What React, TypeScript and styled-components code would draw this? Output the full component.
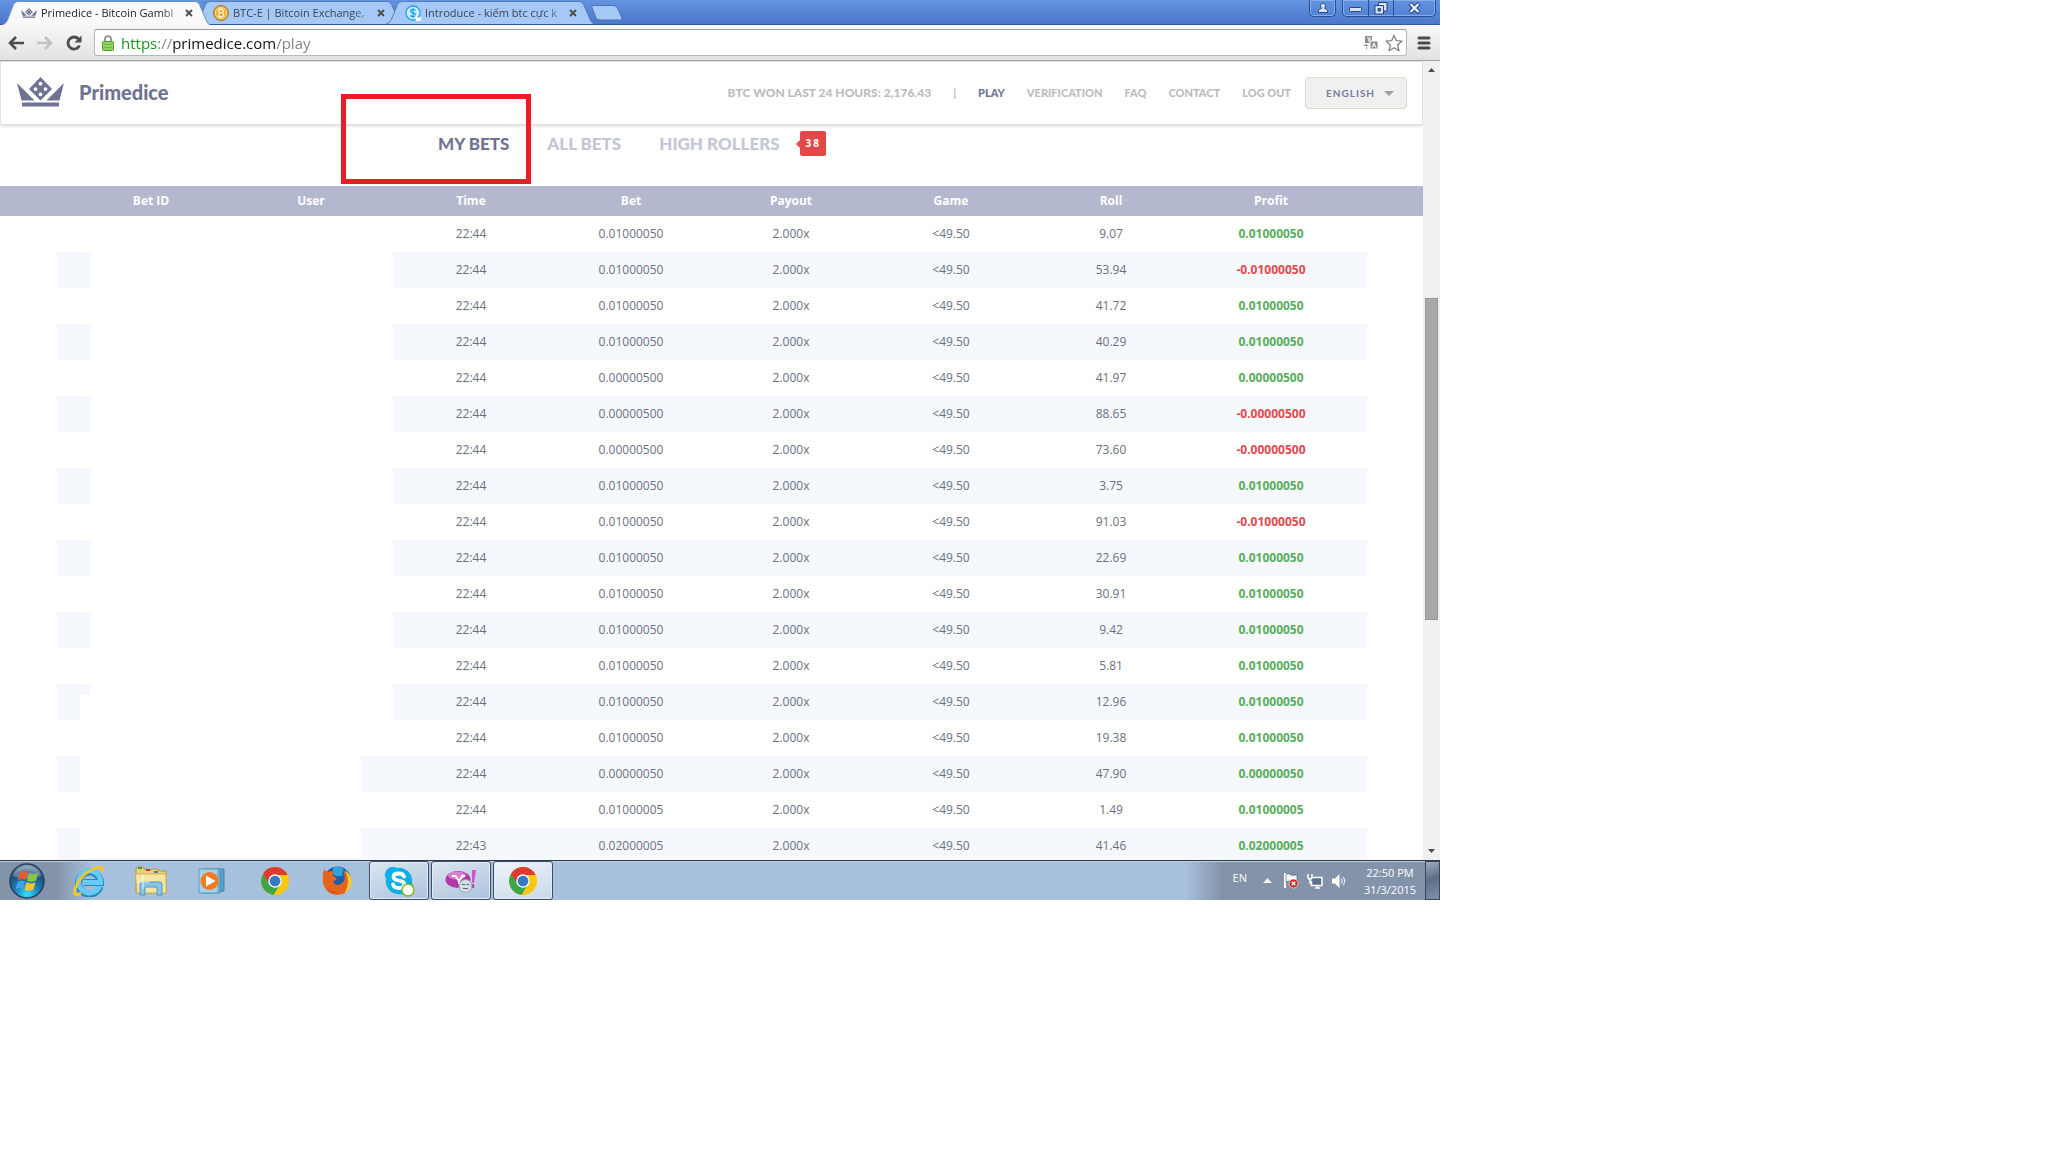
import React from 'react';
import styled, { createGlobalStyle } from 'styled-components';

const UI = '"Open Sans", "Noto Sans", sans-serif';
const BRAND = 'Lato, "Open Sans", sans-serif';

const GlobalStyle = createGlobalStyle`
  *, *::before, *::after { box-sizing: border-box; }
  body { margin: 0; background: #fff; font-family: ${UI}; }
  button, input, select { font-family: inherit; margin: 0; padding: 0; border: 0; background: none; }
  svg { display: block; flex: none; }
`;

const Desktop = styled.div`
  width: 100%;
  max-width: 1440px;
  height: 100vh;
  max-height: 900px;
  display: flex;
  flex-direction: column;
  overflow: hidden;
`;

/* ---------- browser chrome ---------- */

const TitleBar = styled.header`
  display: flex;
  justify-content: space-between;
  height: 25px;
  flex: none;
  padding: 0 4px 0 2px;
  background: linear-gradient(#6394e0, #4a78cb);
  border-bottom: 1px solid #34579c;
`;

const TabStrip = styled.div`
  display: flex;
  padding-top: 1px;
`;

const Tab = styled.div<{ $active?: boolean }>`
  position: relative;
  z-index: ${p => (p.$active ? 2 : 1)};
  width: 208px;
  height: ${p => (p.$active ? 24 : 23)}px;
  margin-right: -16px;
  display: flex;
  align-items: center;
  padding: 0 13px 0 19px;
`;

const TabShape = styled.svg`
  position: absolute;
  inset: 0;
  z-index: -1;
`;

const TabTitle = styled.span<{ $active?: boolean }>`
  flex: 1;
  margin-left: 4px;
  white-space: nowrap;
  font-size: 11px;
  line-height: 20px;
  color: ${p => (p.$active ? '#222' : '#3b4350')};
  mask-image: linear-gradient(90deg, #000 85%, rgba(0, 0, 0, 0.2));
`;

const TabClose = styled.button`
  width: 16px;
  height: 16px;
  display: grid;
  place-items: center;
`;

const NewTab = styled.button`
  width: 34px;
  height: 16px;
  margin: 4px 0 0 12px;
`;

const WindowControls = styled.div`
  display: flex;
  gap: 6px;
  height: 17px;
`;

const ControlGroup = styled.div`
  display: flex;
  border: 1px solid #2c4d8f;
  border-top: 0;
  border-radius: 0 0 5px 5px;
  box-shadow: inset 0 0 0 1px #86aee8;
`;

const Control = styled.button<{ $wide?: boolean }>`
  width: ${p => (p.$wide ? 42 : 25)}px;
  display: grid;
  place-items: center;
  & + & { border-left: 1px solid #2c4d8f; }
`;

const Toolbar = styled.div`
  display: flex;
  align-items: center;
  flex: none;
  height: 36px;
  padding: 0 7px;
  background: linear-gradient(#f7f7f7, #e2e2e2);
  border-bottom: 1px solid #a3a3a3;
`;

const ToolButton = styled.button`
  width: 17px;
  height: 20px;
  margin-right: 12px;
  display: grid;
  place-items: center;
`;

const Omnibox = styled.div`
  flex: 1;
  height: 27px;
  display: flex;
  align-items: center;
  gap: 7px;
  padding: 0 3px 0 7px;
  background: #fff;
  border: 1px solid #b8b8b8;
  border-top-color: #9d9d9d;
  border-radius: 3px;
`;

const Address = styled.input`
  flex: 1;
  min-width: 0;
  height: 24px;
  font-size: 15px;
  outline: none;
  color: transparent;
  background: linear-gradient(90deg, #0b9314 36px, #808080 36px, #808080 51px, #111 51px, #111 155px, #808080 155px);
  background-clip: text;
  -webkit-background-clip: text;
`;

const IconButton = styled.button`
  display: grid;
  place-items: center;
`;

const Menu = styled(IconButton)`
  margin-left: 10px;
  padding-right: 2px;
`;

/* ---------- page ---------- */

const Viewport = styled.div`
  flex: 1;
  min-height: 0;
  display: flex;
`;

const Page = styled.main`
  position: relative;
  flex: 1;
  min-width: 0;
  overflow: hidden;
  background: #fff;
`;

const SiteHeader = styled.header`
  display: flex;
  align-items: center;
  height: 64px;
  padding: 0 15px 0 16px;
  border: 1px solid #e2e2e2;
  box-shadow: 0 1px 3px rgba(0, 0, 0, 0.18);
`;

const Brand = styled.a`
  display: flex;
  align-items: center;
  gap: 15px;
  padding-bottom: 2px;
  color: #6e7391;
  text-decoration: none;
  font: 900 20px/24px ${BRAND};
`;

const SiteNav = styled.nav`
  display: flex;
  align-items: center;
  gap: 22px;
  margin-left: auto;
  font: 900 11px/16px ${BRAND};
  color: #bcbcbc;
`;

const Stat = styled.span`
  font-size: 12px;
`;

const NavLink = styled.a<{ $active?: boolean }>`
  color: ${p => (p.$active ? '#6e7391' : 'inherit')};
  text-decoration: none;
`;

const LanguageBox = styled.div`
  position: relative;
  margin-left: -8px;
`;

const Language = styled.select`
  appearance: none;
  width: 102px;
  height: 32px;
  padding-left: 20px;
  background: #f0f0f0;
  border: 1px solid #dcdccb;
  border-radius: 4px;
  font-size: 10px;
  font-weight: 700;
  letter-spacing: 1px;
  color: #777b9c;
`;

const Caret = styled.svg`
  position: absolute;
  right: 13px;
  top: 14px;
  pointer-events: none;
`;

const BetTabs = styled.nav`
  display: flex;
  align-items: center;
  height: 61px;
  padding: 0 0 24px 438px;
  gap: 38px;
`;

const BetTab = styled.a<{ $active?: boolean }>`
  display: flex;
  align-items: center;
  color: ${p => (p.$active ? '#6e7391' : '#c3c6d3')};
  text-decoration: none;
  font: 900 17px/24px ${BRAND};
`;

const Badge = styled.span`
  position: relative;
  height: 25px;
  margin-left: 20px;
  padding: 0 5px 0 6px;
  border-radius: 2px;
  background: #e34849;
  color: #fff;
  font: 700 10px/25px ${UI};
  letter-spacing: 2px;
  &::before {
    content: '';
    position: absolute;
    left: -4px;
    top: 9px;
    border: 4px solid transparent;
    border-left: 0;
    border-right-color: #e34849;
  }
`;

const BetTable = styled.table`
  display: block;
  width: 100%;
  font-size: 12px;
  line-height: 18px;
  color: #6b7080;
`;

const TableHead = styled.thead`
  display: block;
  padding: 0 56px 0 57px;
  background: #b4b8ce;
  color: #fff;
`;

const TableBody = styled.tbody`
  display: block;
  padding: 0 56px 0 57px;
`;

const Row = styled.tr`
  display: grid;
  grid-template-columns: repeat(8, 1fr);
  padding: 0 16px 0 14px;
  ${TableBody} &:nth-child(even) { background: #f5f8fd; }
`;

const HeadCell = styled.th`
  padding: 6px 0;
  font-weight: 700;
`;

const Cell = styled.td`
  height: 36px;
  padding: 9px 0;
  text-align: center;
`;

const Profit = styled(Cell)<{ $loss: boolean }>`
  font-weight: 700;
  color: ${p => (p.$loss ? '#e2484d' : '#58ad5c')};
`;

/* Blanked-out user data and the marker drawn over the page. */
const Blank = styled.div<{ $x: number; $y: number; $w: number; $h: number }>`
  position: absolute;
  left: ${p => p.$x}px;
  top: ${p => p.$y}px;
  width: ${p => p.$w}px;
  height: ${p => p.$h}px;
  background: #fff;
`;

const Marker = styled.div`
  position: absolute;
  left: 341px;
  top: 33px;
  width: 190px;
  height: 90px;
  border: 5px solid #ed1c24;
  pointer-events: none;
`;

const Scrollbar = styled.div`
  width: 17px;
  flex: none;
  display: flex;
  flex-direction: column;
  background: #f0f0f0;
`;

const ScrollButton = styled.button`
  height: 18px;
  display: grid;
  place-items: center;
`;

const Track = styled.div`
  flex: 1;
  padding: 219px 2px 0;
`;

const Thumb = styled.div`
  height: 322px;
  background: #a8a8a8;
  border: 1px solid #979797;
`;

/* ---------- taskbar ---------- */

const Taskbar = styled.footer`
  display: flex;
  flex: none;
  height: 40px;
  border-top: 1px solid #2f3b4b;
  box-shadow: inset 0 1px 0 #bccde0;
  background: linear-gradient(90deg, #8394aa 56px, #a6c0dd 92px, #a6c0dd 1186px, #8394aa 1222px);
`;

const Start = styled.button`
  width: 58px;
  display: grid;
  place-items: center;
  padding-right: 4px;
`;

const TaskButton = styled.button<{ $open?: boolean; $front?: boolean }>`
  width: 60px;
  height: 39px;
  margin: 0 1px;
  display: grid;
  place-items: center;
  border-radius: 3px;
  border: 1px solid ${p => (p.$open ? '#3d4c60' : 'transparent')};
  box-shadow: ${p => (p.$open ? 'inset 0 0 0 1px #e3ecf6' : 'none')};
  background: ${p =>
    p.$front
      ? 'linear-gradient(160deg, #eff4f9, #c9d8ea)'
      : p.$open
        ? 'linear-gradient(160deg, #dbe5f0, #acc3dd)'
        : 'none'};
`;

const Tray = styled.div`
  display: flex;
  align-items: center;
  margin-left: auto;
  color: #fff;
  font-size: 11px;
  line-height: 17px;
`;

const InputLanguage = styled.span`
  margin: 0 8px 6px 0;
`;

const TrayIcon = styled.button`
  width: 24px;
  height: 24px;
  display: grid;
  place-items: center;
`;

const Clock = styled.time`
  width: 66px;
  margin: 0 2px 0 6px;
  text-align: center;
  white-space: nowrap;
`;

const ShowDesktop = styled.button`
  width: 15px;
  align-self: stretch;
  border: 1px solid #37465a;
  background: linear-gradient(160deg, #a0adbd, #5d6f86 45%, #7d8fa6);
`;

/* ---------- icons ---------- */

const Crown = ({ w, h, color }: { w: number; h: number; color: string }) => (
  <svg width={w} height={h} viewBox="0 0 47 30" preserveAspectRatio="none" fill={color} aria-hidden="true">
    <path d="M0 6 L17.500 23.500 H4.500z M47 6 L29.500 23.500 H42.500z M5 25.500 H42 V29.500 H5z" />
    <path
      fillRule="evenodd"
      d="M23.500 0 35 12 23.500 23.500 12 12z M23.500 4.800a1.900 1.900 0 1 0 .01 0z M18.500 10.200a1.900 1.900 0 1 0 .01 0z M28.500 10.200a1.900 1.900 0 1 0 .01 0z M23.500 15.500a1.900 1.900 0 1 0 .01 0z"
    />
  </svg>
);

const Coin = () => (
  <svg width="16" height="16" viewBox="0 0 16 16" aria-hidden="true">
    <circle cx="8" cy="8" r="7.500" fill="#e3ab3c" stroke="#a9771f" />
    <circle cx="8" cy="8" r="5.500" fill="none" stroke="#f7dc8f" />
    <path d="M6 4.500V11.500M5 4.500H9Q10.500 4.800 10.300 6.300 10 7.800 8.500 7.800H6M8.500 7.800Q11 8 10.800 9.700 10.500 11.500 8.500 11.500H5M7 3v1.500M9 3v1.500M7 11.500V13M9 11.500V13" fill="none" stroke="#fff4cf" strokeWidth="1.100" />
  </svg>
);

const Dollar = () => (
  <svg width="16" height="16" viewBox="0 0 16 16" aria-hidden="true">
    <circle cx="8" cy="8" r="7" fill="#d5ecfc" stroke="#1ea4ee" strokeWidth="1.300" />
    <path d="M10.500 5.500Q10 4.300 8 4.300 5.600 4.300 5.600 6 5.600 7.500 8 7.900 10.600 8.300 10.600 10 10.500 11.600 8 11.600 5.700 11.600 5.300 10.200M8 2.800V13" fill="none" stroke="#1ea4ee" strokeWidth="1.300" />
    <path d="M10 10.500h2v2h4V16h-5z" fill="#fff" />
  </svg>
);

const CloseIcon = () => (
  <svg width="8" height="8" viewBox="0 0 8 8" aria-hidden="true">
    <path d="M1 1 7 7M7 1 1 7" stroke="#4c4c4c" strokeWidth="1.800" />
  </svg>
);

const TabBackground = ({ active }: { active?: boolean }) => (
  <TabShape width="208" height={active ? 24 : 23} viewBox="0 0 208 24" preserveAspectRatio="none" aria-hidden="true">
    <path
      d="M0 24Q4 23 5.500 19L11.500 3.500Q13 .5 16 .5H193Q196 .5 197.500 3.500L204 19Q205.500 23 208 24"
      fill={active ? '#f9f9f9' : '#a5c8f6'}
      stroke={active ? '#6f8fc4' : '#5479b5'}
      strokeWidth="1"
    />
  </TabShape>
);

const ChromeLogo = () => (
  <svg width="30" height="30" viewBox="0 0 30 30" aria-hidden="true">
    <circle cx="15" cy="15" r="14" fill="#fcc80f" />
    <path d="M2.900 8A14 14 0 0 1 27.600 9H15L9 18z" fill="#dd3b30" />
    <path d="M2.900 8A14 14 0 0 0 13.500 28.900L20 18.500 15 21 9.500 18z" fill="#3fa648" />
    <circle cx="15" cy="15" r="6.800" fill="#eef2f5" />
    <circle cx="15" cy="15" r="5.300" fill="#3577c0" />
  </svg>
);

const StartOrb = () => (
  <svg width="36" height="36" viewBox="0 0 36 36" aria-hidden="true">
    <defs>
      <radialGradient id="orb" cx=".5" cy=".9" r=".9">
        <stop offset="0" stopColor="#35e0fb" />
        <stop offset=".4" stopColor="#1c7fb8" />
        <stop offset=".75" stopColor="#234e76" />
        <stop offset="1" stopColor="#8fa9c0" />
      </radialGradient>
    </defs>
    <circle cx="18" cy="18" r="17" fill="url(#orb)" stroke="#24415f" strokeWidth="1.500" />
    <path d="M4 13Q8 3 18 3 28 3 32 13 18 18 4 13" fill="#fff" opacity=".28" />
    <path d="M11 10Q15 7 18.500 9.500L16.500 17Q13 15 9 17.500z" fill="#ee5a26" />
    <path d="M20 10Q24 12.500 29 10L27 17.500Q22.500 20 18 17.500z" fill="#8fc43c" />
    <path d="M8.500 19Q12.500 16.500 16 18.800L14 26Q10.500 24 6.500 26.500z" fill="#3ba5e8" />
    <path d="M17.500 19.300Q22 21.500 26.500 19.200L24.500 26.500Q20 29 15.500 26.500z" fill="#fcc12b" />
  </svg>
);

const Explorer = () => (
  <svg width="32" height="32" viewBox="0 0 32 32" aria-hidden="true">
    <path d="M27 21.500A11 11 0 1 1 27.500 17.500H11" fill="none" stroke="#2488c4" strokeWidth="7" />
    <path d="M26.500 21.500A11 11 0 1 1 27.500 17.500H11" fill="none" stroke="#66cbf5" strokeWidth="5" />
    <path d="M8 28Q0 33 2 24 6 11 20 4 31-1 29.500 7" fill="none" stroke="#f5c52a" strokeWidth="2.800" />
  </svg>
);

const Folder = () => (
  <svg width="34" height="32" viewBox="0 0 34 32" aria-hidden="true">
    <path d="M2 4 3 2H9L10 4 17 5 18 4H24L25 6H32V28H2z" fill="#e8cf7a" stroke="#b8963c" />
    <path d="M4 3H8" stroke="#2ca13c" strokeWidth="2" />
    <path d="M12 5H16" stroke="#c23a2c" strokeWidth="2" />
    <path d="M20 7H24" stroke="#2f84cf" strokeWidth="2" />
    <path d="M1.500 9H32V28H3z" fill="#f6e6a4" stroke="#cfb256" />
    <path d="M6 30V19Q6 17 8 17H26Q28 17 28 19V30H23V22H11V30z" fill="#8ac6e4" stroke="#4c97c2" />
    <path d="M9 10V24M3 17H15" stroke="#fff" opacity=".8" />
  </svg>
);

const MediaPlayer = () => (
  <svg width="30" height="28" viewBox="0 0 30 28" aria-hidden="true">
    <path d="M8 2H26V24L8 26z" fill="#5b9fc8" stroke="#4486ae" />
    <path d="M4 2H22V26H4z" fill="#84bede" stroke="#4d93bd" />
    <path d="M1 2H20V26H1z" fill="#a6d1e8" stroke="#5a9dc2" />
    <circle cx="11.500" cy="14" r="9" fill="#f37a1f" />
    <path d="M8 8.500 17.500 14 8 19.500z" fill="#fff" />
  </svg>
);

const Firefox = () => (
  <svg width="32" height="32" viewBox="0 0 32 32" aria-hidden="true">
    <circle cx="16.500" cy="15" r="13.500" fill="#1c5fa8" />
    <path d="M12 3Q17 0 23 4 20 7 22 10 16 13 12 9z" fill="#2fa5dd" />
    <path d="M3 4Q5 7 8 7 11 5 13 7 11 9 12 11 15 12 16 14 14 16 12 16 13 20 17 20 21 19 23 16 25 11 22 6 29 8 30 15 30 29 16 30 4 29 2 17 1 10 3 4" fill="#e4661e" />
    <path d="M24 5Q32 11 30.500 19 29 25 24 28 30 16 24 5" fill="#fbc92d" />
    <path d="M4 20Q8 28 17 27 10 31 4 20" fill="#c7401a" />
  </svg>
);

const Skype = () => (
  <svg width="32" height="32" viewBox="0 0 32 32" aria-hidden="true">
    <path d="M2 9A8 8 0 0 1 14 3 13 13 0 0 1 29 18 8 8 0 0 1 18 29 13 13 0 0 1 3 14 8 8 0 0 1 2 9" fill="#0eaee9" />
    <path d="M21 11.500Q20 8.500 15.500 8.500 10.500 8.500 10.500 12 10.500 14.500 15.500 15.500 21.500 16.500 21.500 19.500 21 23 16 23 11 23 10 19.500" fill="none" stroke="#fff" strokeWidth="3.800" strokeLinecap="round" />
    <circle cx="25" cy="25" r="6" fill="#fff" stroke="#7bbb1e" strokeWidth="1.500" />
  </svg>
);

const Messenger = () => (
  <svg width="32" height="24" viewBox="0 0 32 24" aria-hidden="true">
    <ellipse cx="13" cy="10.500" rx="12.500" ry="8.500" fill="#b238a8" />
    <ellipse cx="12" cy="6.500" rx="9" ry="4" fill="#e9a3e2" opacity=".7" />
    <path d="M7 7H11M10.500 7 14 12 18 7M14 12V15M16 7H20" fill="none" stroke="#fff" strokeWidth="2" />
    <path d="M27 1H31L29 14H27z" fill="#d552c8" />
    <circle cx="27.500" cy="17" r="2" fill="#b238a8" />
    <circle cx="20.500" cy="17" r="6.500" fill="#d9dee6" stroke="#97a0ad" />
    <path d="M17 15.500h3M21.500 15.500h3M18 19.500h5" stroke="#5d6673" />
  </svg>
);

/* ---------- data ---------- */

type Bet = [time: string, bet: string, roll: string, profit: string];

const bets: Bet[] = [
  ['22:44', '0.01000050', '9.07', '0.01000050'],
  ['22:44', '0.01000050', '53.94', '-0.01000050'],
  ['22:44', '0.01000050', '41.72', '0.01000050'],
  ['22:44', '0.01000050', '40.29', '0.01000050'],
  ['22:44', '0.00000500', '41.97', '0.00000500'],
  ['22:44', '0.00000500', '88.65', '-0.00000500'],
  ['22:44', '0.00000500', '73.60', '-0.00000500'],
  ['22:44', '0.01000050', '3.75', '0.01000050'],
  ['22:44', '0.01000050', '91.03', '-0.01000050'],
  ['22:44', '0.01000050', '22.69', '0.01000050'],
  ['22:44', '0.01000050', '30.91', '0.01000050'],
  ['22:44', '0.01000050', '9.42', '0.01000050'],
  ['22:44', '0.01000050', '5.81', '0.01000050'],
  ['22:44', '0.01000050', '12.96', '0.01000050'],
  ['22:44', '0.01000050', '19.38', '0.01000050'],
  ['22:44', '0.00000050', '47.90', '0.00000050'],
  ['22:44', '0.01000005', '1.49', '0.01000005'],
  ['22:43', '0.02000005', '41.46', '0.02000005'],
];

const columns = ['Bet ID', 'User', 'Time', 'Bet', 'Payout', 'Game', 'Roll', 'Profit'];

const tabs = [
  { title: 'Primedice - Bitcoin Gambl', icon: <Crown w={16} h={10} color="#6e7391" />, active: true },
  { title: 'BTC-E | Bitcoin Exchange,', icon: <Coin /> },
  { title: 'Introduce - kiếm btc cực k', icon: <Dollar /> },
];

export default function App() {
  return (
    <Desktop>
      <GlobalStyle />
      <TitleBar>
        <TabStrip>
          {tabs.map(t => (
            <Tab key={t.title} $active={t.active}>
              <TabBackground active={t.active} />
              {t.icon}
              <TabTitle $active={t.active}>{t.title}</TabTitle>
              <TabClose aria-label="Close tab"><CloseIcon /></TabClose>
            </Tab>
          ))}
          <NewTab aria-label="New tab">
            <svg width="34" height="16" viewBox="0 0 34 16">
              <path d="M3 .5H23Q26 .5 27.500 3L32 13Q32.500 15 30.500 15H10Q7 15 6 13L2 2.500Q1.500 .5 3 .5z" fill="#a5c8f6" stroke="#4e73b3" />
            </svg>
          </NewTab>
        </TabStrip>
        <WindowControls>
          <ControlGroup>
            <Control aria-label="User">
              <svg width="12" height="12" viewBox="0 0 12 12" fill="#d5e3f8" stroke="#2c4679">
                <path d="M1.500 10.500V8.500Q2 7 4.500 6.500 3.500 5 3.500 3.500 4 1 6 1 8 1 8.500 3.500 8.500 5 7.500 6.500 10 7 10.500 8.500V10.500z" />
              </svg>
            </Control>
          </ControlGroup>
          <ControlGroup>
            <Control aria-label="Minimize">
              <svg width="13" height="12"><rect x=".5" y="5.500" width="12" height="4" rx="1" fill="#d5e3f8" stroke="#2c4679" /></svg>
            </Control>
            <Control aria-label="Restore">
              <svg width="14" height="14" fill="#d5e3f8" stroke="#2c4679">
                <path d="M4.500 1.500H13V10H4.500z" />
                <path d="M1 4.500H9.500V13H1z" />
                <path d="M4 7.500H6.500V10H4z" fill="#4a78cb" />
              </svg>
            </Control>
            <Control $wide aria-label="Close">
              <svg width="13" height="12" fill="none">
                <path d="M2 1.500 11 10.500M11 1.500 2 10.500" stroke="#2c4679" strokeWidth="4.500" />
                <path d="M2.500 2 10.500 10M10.500 2 2.500 10" stroke="#e4edfa" strokeWidth="2.400" />
              </svg>
            </Control>
          </ControlGroup>
        </WindowControls>
      </TitleBar>

      <Toolbar>
        <ToolButton aria-label="Back">
          <svg width="17" height="14" viewBox="0 0 17 14" fill="none" stroke="#4c4c4c" strokeWidth="2.600"><path d="M9 1 3 7 9 13M3 7H17" /></svg>
        </ToolButton>
        <ToolButton aria-label="Forward">
          <svg width="17" height="14" viewBox="0 0 17 14" fill="none" stroke="#c2c2c2" strokeWidth="2.600"><path d="M9 1 15 7 9 13M15 7H1" /></svg>
        </ToolButton>
        <ToolButton aria-label="Reload">
          <svg width="16" height="16" viewBox="0 0 16 16" fill="none" stroke="#4c4c4c" strokeWidth="2.800">
            <path d="M13.500 10.500A6 6 0 1 1 12.500 4" />
            <path d="M15.500 .5V7.500H8.500z" fill="#4c4c4c" stroke="none" />
          </svg>
        </ToolButton>
        <Omnibox>
          <svg width="12" height="16" viewBox="0 0 12 16" aria-hidden="true">
            <path d="M3 7V4.500Q3 1.200 6 1.200 9 1.200 9 4.500V7" fill="none" stroke="#8f8f8f" strokeWidth="1.800" />
            <rect x=".5" y="6.500" width="11" height="9" rx="1" fill="#8fd35f" stroke="#4f9a35" />
            <path d="M2 9.500H10M2 12.500H10" stroke="#6cba44" />
          </svg>
          <Address aria-label="Address" defaultValue="https://primedice.com/play" spellCheck={false} />
          <IconButton aria-label="Translate">
            <svg width="14" height="15" viewBox="0 0 14 15">
              <path d="M1 1H8V8H1z" fill="#8d8d8d" />
              <path d="M3 3H6.500L4.500 6.500M4 4.800H6.500" stroke="#fff" fill="none" />
              <path d="M6 6H14V14H6z" fill="#8d8d8d" stroke="#fff" />
              <path d="M8 12.500 10 8 12 12.500M8.800 11H11.200" stroke="#fff" fill="none" />
              <path d="M0 10.500H4M2.500 9V14" stroke="#8d8d8d" strokeDasharray="2 1" />
            </svg>
          </IconButton>
          <IconButton aria-label="Bookmark">
            <svg width="18" height="18" viewBox="0 0 18 18">
              <path d="M9 1.200 11.300 6.600 17 7 12.700 11 14 16.800 9 13.800 4 16.800 5.300 11 1 7 6.700 6.600z" fill="#fff" stroke="#7e7e7e" strokeWidth="1.200" strokeLinejoin="round" />
            </svg>
          </IconButton>
        </Omnibox>
        <Menu aria-label="Menu">
          <svg width="14" height="14" stroke="#4c4c4c" strokeWidth="3" strokeLinecap="round"><path d="M2 2H12M2 7H12M2 12H12" /></svg>
        </Menu>
      </Toolbar>

      <Viewport>
        <Page>
          <SiteHeader>
            <Brand href="#home"><Crown w={47} h={30} color="#6e7391" />Primedice</Brand>
            <SiteNav>
              <Stat>BTC WON LAST 24 HOURS: 2,176.43</Stat>
              <span>|</span>
              <NavLink href="#play" $active>PLAY</NavLink>
              <NavLink href="#verification">VERIFICATION</NavLink>
              <NavLink href="#faq">FAQ</NavLink>
              <NavLink href="#contact">CONTACT</NavLink>
              <NavLink href="#logout">LOG OUT</NavLink>
              <LanguageBox>
                <Language aria-label="Language"><option>ENGLISH</option></Language>
                <Caret width="10" height="5" aria-hidden="true"><path d="M0 0H10L5 5z" fill="#a0a0a0" /></Caret>
              </LanguageBox>
            </SiteNav>
          </SiteHeader>
          <BetTabs>
            <BetTab href="#my" $active>MY BETS</BetTab>
            <BetTab href="#all">ALL BETS</BetTab>
            <BetTab href="#high">HIGH ROLLERS<Badge>38</Badge></BetTab>
          </BetTabs>
          <BetTable>
            <TableHead>
              <Row>{columns.map(c => <HeadCell key={c} scope="col">{c}</HeadCell>)}</Row>
            </TableHead>
            <TableBody>
              {bets.map(([time, bet, roll, profit], i) => (
                <Row key={i}>
                  <Cell />
                  <Cell />
                  <Cell>{time}</Cell>
                  <Cell>{bet}</Cell>
                  <Cell>2.000x</Cell>
                  <Cell>&lt;49.50</Cell>
                  <Cell>{roll}</Cell>
                  <Profit $loss={profit.startsWith('-')}>{profit}</Profit>
                </Row>
              ))}
            </TableBody>
          </BetTable>
          <Blank $x={91} $y={155} $w={302} $h={510} />
          <Blank $x={80} $y={634} $w={281} $h={163} />
          <Marker />
        </Page>
        <Scrollbar>
          <ScrollButton aria-label="Scroll up">
            <svg width="7" height="4"><path d="M0 4H7L3.500 0z" fill="#4c4c4c" /></svg>
          </ScrollButton>
          <Track><Thumb /></Track>
          <ScrollButton aria-label="Scroll down">
            <svg width="7" height="4"><path d="M0 0H7L3.500 4z" fill="#4c4c4c" /></svg>
          </ScrollButton>
        </Scrollbar>
      </Viewport>

      <Taskbar>
        <Start aria-label="Start"><StartOrb /></Start>
        <TaskButton aria-label="Internet Explorer"><Explorer /></TaskButton>
        <TaskButton aria-label="File Explorer"><Folder /></TaskButton>
        <TaskButton aria-label="Media Player"><MediaPlayer /></TaskButton>
        <TaskButton aria-label="Chrome"><ChromeLogo /></TaskButton>
        <TaskButton aria-label="Firefox"><Firefox /></TaskButton>
        <TaskButton aria-label="Skype" $open><Skype /></TaskButton>
        <TaskButton aria-label="Yahoo Messenger" $open><Messenger /></TaskButton>
        <TaskButton aria-label="Chrome window" $open $front><ChromeLogo /></TaskButton>
        <Tray>
          <InputLanguage>EN</InputLanguage>
          <TrayIcon aria-label="Show hidden icons">
            <svg width="9" height="5"><path d="M0 5H9L4.500 0z" fill="#eef2f7" /></svg>
          </TrayIcon>
          <TrayIcon aria-label="Action Center">
            <svg width="16" height="17" viewBox="0 0 16 17">
              <path d="M2 1V16" stroke="#fff" strokeWidth="2" />
              <path d="M3 2Q6 1 8 3 10 4 14 2.500V10Q10 11 8 9.500 6 8.500 3 10z" fill="#f4f6f8" stroke="#4b5a6c" strokeWidth=".6" />
              <circle cx="10.500" cy="11.500" r="4.500" fill="#d42a1e" stroke="#fff" strokeWidth=".6" />
              <path d="M8.700 9.700 12.300 13.300M12.300 9.700 8.700 13.300" stroke="#fff" strokeWidth="1.400" />
            </svg>
          </TrayIcon>
          <TrayIcon aria-label="Network">
            <svg width="16" height="16" viewBox="0 0 16 16" fill="none" stroke="#fff">
              <path d="M5.500 4.500H15V12.500H4.500V8" fill="#5f7189" strokeWidth="1.500" />
              <path d="M1 1V4.500Q1 6 3 6 5 6 5 4.500V1M3 6V11M8 15H13M10.500 12.500V15" strokeWidth="1.500" />
            </svg>
          </TrayIcon>
          <TrayIcon aria-label="Volume">
            <svg width="14" height="14" viewBox="0 0 14 14" fill="#fff">
              <path d="M0 4.500H3L7.500 0V14L3 9.500H0z" />
              <path d="M9.500 4.500Q11 7 9.500 9.500M11.500 3Q14 7 11.500 11" fill="none" stroke="#fff" />
            </svg>
          </TrayIcon>
          <Clock>22:50 PM<br />31/3/2015</Clock>
          <ShowDesktop aria-label="Show desktop" />
        </Tray>
      </Taskbar>
    </Desktop>
  );
}
